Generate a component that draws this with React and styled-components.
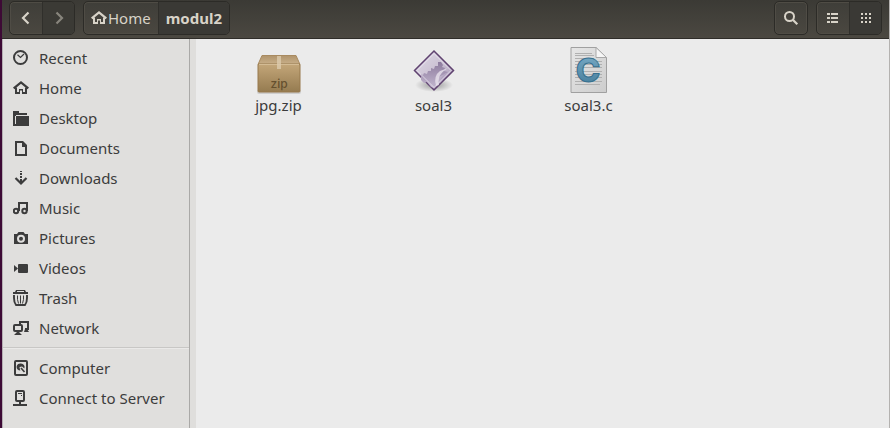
import React from 'react';
import styled, { createGlobalStyle, css } from 'styled-components';

const GlobalStyle = createGlobalStyle`
  * { box-sizing: border-box; }
  body { margin: 0; background: #ebebeb; }
  button { font: inherit; margin: 0; }
  svg { display: block; flex: none; }
`;

const Window = styled.div`
  display: flex;
  flex-direction: column;
  min-height: 100vh;
  border-left: 2px solid #3d0a35;
  border-right: 1px solid #b4b2b0;
  font-family: "Noto Sans", "Open Sans", sans-serif;
  font-size: 15px;
  line-height: 20px;
  color: #3c3c3c;
`;

const Toolbar = styled.header`
  display: flex;
  align-items: flex-start;
  gap: 8px;
  height: 39px;
  padding: 1px 7px 0;
  background: linear-gradient(#3b3a35, #4b4841);
  border-bottom: 1px solid #2f2d29;
`;

const Spacer = styled.div`
  flex: 1;
`;

const ButtonGroup = styled.div`
  display: flex;
  height: 34px;
  border: 1px solid #2c2b27;
  border-radius: 5px;
  background: linear-gradient(#3f3e39, #4a4740);
  box-shadow: inset 0 0 0 1px #4f4c45;
  overflow: hidden;
`;

const ToolButton = styled.button`
  display: flex;
  align-items: center;
  justify-content: center;
  gap: 1px;
  min-width: 32px;
  padding: 0 ${(p) => (p.$text ? '7px' : '0')};
  border: 0;
  background: transparent;
  color: #d8d3c8;
  & + & { border-left: 1px solid #302f2b; }
  ${(p) => p.$pressed && css`
    background: #3a3935;
    font-weight: 700;
  `}
  &:disabled { background: #3b3a35; color: #88857d; }
`;

const Body = styled.div`
  display: flex;
  flex: 1;
`;

const Sidebar = styled.nav`
  width: 188px;
  flex: none;
  padding-top: 4px;
  background: #e0dfdd;
  border-left: 1px solid #b5afb3;
  border-right: 1px solid #aaa9a7;
`;

const PlaceList = styled.ul`
  list-style: none;
  margin: 0;
  padding: 0;
  & + & {
    margin-top: 4px;
    padding-top: 5px;
    border-top: 1px solid #c8c7c5;
    box-shadow: inset 0 1px #eae9e8;
  }
`;

const Place = styled.a`
  display: flex;
  align-items: center;
  gap: 10px;
  height: 30px;
  padding-left: 10px;
  color: inherit;
  text-decoration: none;
  white-space: nowrap;
`;

const Files = styled.main`
  flex: 1;
  display: grid;
  grid-template-columns: repeat(auto-fill, 155px);
  align-content: start;
  padding: 8px 5px;
  border-left: 6px solid #dfdedc;
  background: #ebebeb;
`;

const File = styled.figure`
  display: flex;
  flex-direction: column;
  align-items: center;
  margin: 0;
`;

const Svg16 = ({ children }) => (
  <svg width="16" height="16" viewBox="0 0 16 16" fill="currentColor" aria-hidden="true">{children}</svg>
);

const HomeIcon = () => (
  <Svg16>
    <path d="M.700 8.300 8 2.400l7.300 5.900" fill="none" stroke="currentColor" strokeWidth="2.200" />
    <path d="M2 7.500h2V12h2V9h4v3h2V7.500h2V14H9v-3.500H7V14H2z" />
  </Svg16>
);

const RecentIcon = () => (
  <Svg16>
    <g fill="none" stroke="currentColor">
      <circle cx="7.500" cy="7.500" r="6.500" strokeWidth="2" />
      <path d="M4.500 4.800 7.500 7.500l3.500-3.500" strokeWidth="1.200" />
    </g>
  </Svg16>
);

const DesktopIcon = () => (
  <Svg16>
    <path d="M0 1h6v2h8v2H3v1H2v9H0zM3 7V6h13v10H3zM0 14h3v2H0z" />
  </Svg16>
);

const DocumentsIcon = () => (
  <Svg16>
    <path d="M2 1h8l4 4v11H2zm2 2v11h8V7H9V3z" fillRule="evenodd" />
  </Svg16>
);

const DownloadsIcon = () => (
  <Svg16>
    <path d="M7 1h2v1H7zM7 3h2v2H7zM7 6h2v2H7zM7 9h2v3H7z" />
    <path d="m2.500 8 5.500 5.500L13.500 8" fill="none" stroke="currentColor" strokeWidth="2.200" />
  </Svg16>
);

const MusicIcon = () => (
  <Svg16>
    <g fill="none" stroke="currentColor" strokeWidth="2">
      <circle cx="3" cy="11" r="2.200" />
      <circle cx="11.500" cy="11" r="2.200" />
      <path d="M6 11V3h8v8" />
    </g>
  </Svg16>
);

const PicturesIcon = () => (
  <Svg16>
    <path d="M1 4h3l1.500-2h5L12 4h3v10H1zm7 .800a4 4 0 1 0 0 8 4 4 0 0 0 0-8zm0 2a2 2 0 1 1 0 4 2 2 0 0 1 0-4z" fillRule="evenodd" />
  </Svg16>
);

const VideosIcon = () => (
  <Svg16>
    <rect x="5" y="4" width="10" height="9" rx="1" />
    <path d="M1 5v7l4-3.500z" />
  </Svg16>
);

const TrashIcon = () => (
  <Svg16>
    <path d="M3 0h9l1 2h2v2H0V2h2zm1 1v1h7V1z" fillRule="evenodd" />
    <g fill="none" stroke="currentColor">
      <path d="M1 5v3q0 4.500 2 7h9q2-2.500 2-7V5" strokeWidth="1.900" />
      <path d="M4.500 5.500q-.500 4 1 8M7.500 5.500v8M10.500 5.500q.500 4-1 8" />
    </g>
  </Svg16>
);

const NetworkIcon = () => (
  <Svg16>
    <g fill="none" stroke="currentColor" strokeWidth="2">
      <path d="M7 4V2h8v7h-3" />
      <rect x="1" y="5" width="8" height="6" rx="1" />
    </g>
    <path d="M4 12h2l3 3H1zM12 9h2l2 3h-5z" />
  </Svg16>
);

const ComputerIcon = () => (
  <Svg16>
    <rect x="2" y="1" width="12" height="14" rx="1" fill="none" stroke="currentColor" strokeWidth="2" />
    <path d="M8 3.500a3.600 3.600 0 1 0-.600 7.100L7 9.500 6.500 7 9 6.500l2.300 2A3.600 3.600 0 0 0 8 3.500z" />
    <path d="m8 8 3.500 4" stroke="currentColor" strokeWidth="1.600" />
  </Svg16>
);

const ServerIcon = () => (
  <Svg16>
    <rect x="3" y="1" width="8" height="10" rx="1" fill="none" stroke="currentColor" strokeWidth="2" />
    <path d="M5 3h4v1H5zM8 5h1v1H8zM6 12h2v2H6zM0 14h14v2H0z" />
  </Svg16>
);

const Chevron = ({ d }) => (
  <Svg16><path d={d} fill="none" stroke="currentColor" strokeWidth="2.200" /></Svg16>
);

const SearchIcon = () => (
  <Svg16>
    <g fill="none" stroke="currentColor">
      <circle cx="6.500" cy="6.500" r="4.500" strokeWidth="2" />
      <path d="m9.800 9.800 4.500 4.500" strokeWidth="2.200" />
    </g>
  </Svg16>
);

const ListIcon = () => (
  <Svg16>
    <path d="M2 3h3v2H2zM6 3h7v2H6zM2 7h3v2H2zM6 7h7v2H6zM2 11h3v2H2zM6 11h7v2H6z" />
  </Svg16>
);

const GridIcon = () => (
  <Svg16>
    <path d="M3 3h2v2H3zM7 3h2v2H7zM11 3h2v2h-2zM3 7h2v2H3zM7 7h2v2H7zM11 7h2v2h-2zM3 11h2v2H3zM7 11h2v2H7zM11 11h2v2h-2z" />
  </Svg16>
);

const ZipIcon = () => (
  <svg width="48" height="48" viewBox="0 0 48 48" aria-hidden="true">
    <defs>
      <linearGradient id="boxFront" x2="0" y2="1">
        <stop stopColor="#c3a679" /><stop offset="1" stopColor="#957b50" />
      </linearGradient>
      <linearGradient id="boxTop" x2="0" y2="1">
        <stop stopColor="#b0946c" /><stop offset="1" stopColor="#c9b08a" />
      </linearGradient>
    </defs>
    <rect x="2" y="43" width="44" height="4" rx="2" fill="#000" opacity=".12" />
    <path d="M7 8.500h34l4 9H3z" fill="url(#boxTop)" stroke="#a88a60" />
    <rect x="3" y="17" width="42" height="28" rx="1" fill="url(#boxFront)" stroke="#97794c" />
    <path d="M4 17.500h40" stroke="#d3bb94" />
    <path d="M22 9h4v13h-4z" fill="#dccaad" opacity=".8" />
    <text x="24" y="41" textAnchor="middle" fontFamily="Inter, sans-serif" fontWeight="500" fontSize="12" fill="#65502f">zip</text>
  </svg>
);

const ProgramIcon = () => (
  <svg width="48" height="48" viewBox="0 0 48 48" aria-hidden="true">
    <defs>
      <linearGradient id="gem" x2="1" y2="1">
        <stop stopColor="#e0dce6" /><stop offset=".5" stopColor="#cbc1d4" /><stop offset="1" stopColor="#a08fb0" />
      </linearGradient>
      <linearGradient id="gear" x2="0" y2="1">
        <stop stopColor="#8d7b9e" /><stop offset="1" stopColor="#c3b7cf" />
      </linearGradient>
      <radialGradient id="gemShadow">
        <stop stopColor="#000" stopOpacity=".35" /><stop offset="1" stopColor="#000" stopOpacity="0" />
      </radialGradient>
    </defs>
    <ellipse cx="24" cy="38" rx="19" ry="7" fill="url(#gemShadow)" />
    <path d="M24 4 43.500 23.500 24 43 4.500 23.500z" fill="url(#gem)" stroke="#5f4270" strokeWidth="1.500" />
    <path d="m11 27 2 1 1-2 3 1 1-3 3 0 0-3 3 1 1-3 3 0 0-4 3 0 2 3-1 2 3 1-1 3 4 1-5 3-5 2-3 5-1 6-3-1-4-5-3 1-3-3z" fill="url(#gear)" />
    <path d="M30 37q-1-8 9-12l1-1-10 12z" fill="#b3a4c1" />
    <path d="M26 39q-3-10 4-15l8-3q-8 5-9 10-1 4 0 7z" fill="#e4dde9" opacity=".85" />
    <path d="M24 6.500 41 23.500 24 40.500 7 23.500z" fill="none" stroke="#efeaf3" strokeOpacity=".7" />
  </svg>
);

const SourceIcon = () => (
  <svg width="48" height="48" viewBox="0 0 48 48" aria-hidden="true">
    <defs>
      <linearGradient id="sheet" x2="1" y2="1">
        <stop stopColor="#e6e6e6" /><stop offset="1" stopColor="#cdcdcd" />
      </linearGradient>
      <linearGradient id="letter" x2="0" y2="1">
        <stop stopColor="#7fb0cb" /><stop offset="1" stopColor="#3f7896" />
      </linearGradient>
    </defs>
    <path d="M6 .500h25l10.500 10V45.500H6z" fill="url(#sheet)" stroke="#a0a0a0" />
    <path d="M10 6.500h17M10 8.500h19M10 11.500h19M10 14.500h27M10 17.500h27M10 20.500h27M10 24.500h27M10 27.500h27M10 30.500h27M10 34.500h27M10 37.500h25" stroke="#b0b0b0" />
    <path d="M31 .500v10h10.500z" fill="#f6f6f6" stroke="#a8a8a8" />
    <text x="23" y="35" textAnchor="middle" fontFamily="Inter, sans-serif" fontWeight="800" fontSize="33" fill="url(#letter)" stroke="#37708f">C</text>
  </svg>
);

const places = [
  ['Recent', RecentIcon], ['Home', HomeIcon], ['Desktop', DesktopIcon],
  ['Documents', DocumentsIcon], ['Downloads', DownloadsIcon], ['Music', MusicIcon],
  ['Pictures', PicturesIcon], ['Videos', VideosIcon], ['Trash', TrashIcon], ['Network', NetworkIcon],
];
const devices = [['Computer', ComputerIcon], ['Connect to Server', ServerIcon]];
const files = [['jpg.zip', ZipIcon], ['soal3', ProgramIcon], ['soal3.c', SourceIcon]];

const Places = ({ items }) => (
  <PlaceList>
    {items.map(([name, Icon]) => (
      <li key={name}><Place href="#"><Icon />{name}</Place></li>
    ))}
  </PlaceList>
);

export default function App() {
  return (
    <>
      <GlobalStyle />
      <Window>
        <Toolbar>
          <ButtonGroup>
            <ToolButton aria-label="Back"><Chevron d="M10.500 2.500 5 8l5.500 5.500" /></ToolButton>
            <ToolButton aria-label="Forward" disabled><Chevron d="M5.500 2.500 11 8l-5.500 5.500" /></ToolButton>
          </ButtonGroup>
          <ButtonGroup>
            <ToolButton $text><HomeIcon />Home</ToolButton>
            <ToolButton $text $pressed>modul2</ToolButton>
          </ButtonGroup>
          <Spacer />
          <ButtonGroup>
            <ToolButton aria-label="Search"><SearchIcon /></ToolButton>
          </ButtonGroup>
          <ButtonGroup>
            <ToolButton aria-label="List view"><ListIcon /></ToolButton>
            <ToolButton aria-label="Grid view" $pressed><GridIcon /></ToolButton>
          </ButtonGroup>
        </Toolbar>
        <Body>
          <Sidebar>
            <Places items={places} />
            <Places items={devices} />
          </Sidebar>
          <Files>
            {files.map(([name, Icon]) => (
              <File key={name}><Icon /><figcaption>{name}</figcaption></File>
            ))}
          </Files>
        </Body>
      </Window>
    </>
  );
}
